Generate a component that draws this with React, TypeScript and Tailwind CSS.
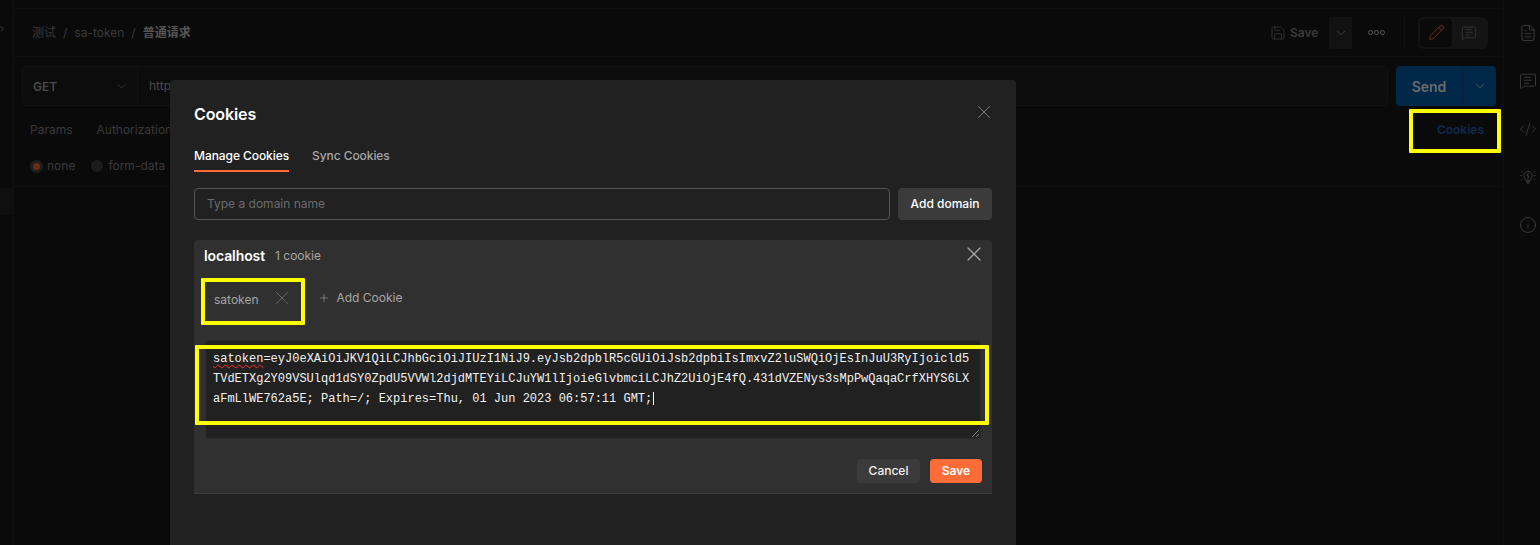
import { X, ChevronDown, Save, Pencil, MessageSquareText, FileText, CodeXml, Info, Plus } from "lucide-react";

const sans = "font-['Inter','Noto_Sans_CJK_SC',sans-serif]";

function Backdrop() {
  return (
    <div className="flex h-[545px] w-[1540px] overflow-hidden bg-[#0a0a0a]">
      <div className="flex w-[14px] shrink-0 flex-col border-r border-[#0f0f0f]">
        <svg width="4" height="8" viewBox="0 0 4 8" fill="none" stroke="#333" strokeWidth="1" className="mt-[26px]">
          <path d="M0 1h2l1 1v1L1 5" />
        </svg>
        <div className="mt-[154px] h-[27px] bg-[#0f0f0f]" />
      </div>
      <div className="flex min-w-0 flex-1 flex-col">
        <div className="h-[9px] shrink-0 border-b border-[#0f0f0f]" />
        <div className="flex h-[48px] shrink-0 items-center border-b border-[#0f0f0f] pl-[18px] pr-[15px]">
          <div className="flex items-center gap-[7px] text-[12px] text-[#3a3a3a]">
            <span>测试</span><span>/</span><span>sa-token</span><span>/</span>
            <span className="font-semibold text-[#555]">普通请求</span>
          </div>
          <div className="ml-auto flex h-[32px] items-center">
            <div className="flex h-[32px] w-[69px] items-center gap-[4px] pl-[10px] text-[12px] font-semibold text-[#3a3a3a]">
              <Save size={16} strokeWidth={1.2} /><span>Save</span>
            </div>
            <div className="flex h-[32px] w-[23px] items-center justify-center bg-[#121212] text-[#555]">
              <ChevronDown size={14} strokeWidth={1.2} />
            </div>
            <div className="ml-[16px] flex gap-[1px]">
              <span className="h-[5px] w-[5px] rounded-full border border-[#555]" />
              <span className="h-[5px] w-[5px] rounded-full border border-[#555]" />
              <span className="h-[5px] w-[5px] rounded-full border border-[#555]" />
            </div>
            <div className="ml-[19px] h-[32px] w-[1px] bg-[#111]" />
            <div className="ml-[13px] flex h-[32px] w-[70px] items-center rounded-[6px] bg-[#141414] p-[2px]">
              <div className="flex h-[28px] w-[32px] items-center justify-center rounded-[4px] bg-[#0a0a0a] text-[#7a3518]"><Pencil size={17} strokeWidth={1.2} /></div>
              <div className="flex h-[28px] w-[34px] items-center justify-center text-[#3a3a3a]"><MessageSquareText size={16} strokeWidth={1.2} /></div>
            </div>
          </div>
        </div>
        <div className="mt-[9px] flex h-[40px] shrink-0 items-stretch pl-[8px] pr-[7px]">
          <div className="flex flex-1 rounded-[3px] border border-[#121212] bg-[#0c0c0c]">
            <div className="flex w-[115px] items-center justify-between border-r border-[#121212] pl-[10px] pr-[9px] pt-[1px] text-[12px] font-semibold text-[#4a4a4a]">
              <span>GET</span><ChevronDown size={13} strokeWidth={1.2} />
            </div>
            <div className="flex items-center pl-[11px] text-[12px] text-[#4a4a4a]">http://localhost:8081/</div>
          </div>
          <div className="ml-[8px] flex w-[100px] rounded-[4px] bg-[#012849] text-[#6b6b6b]">
            <div className="flex w-[67px] items-center justify-center border-r border-[#032139] text-[14px] font-semibold">Send</div>
            <div className="flex flex-1 items-center justify-center"><ChevronDown size={14} strokeWidth={1.2} /></div>
          </div>
        </div>
        <div className="flex h-[48px] shrink-0 items-center pl-[16px] pr-[19px] text-[12px] text-[#3a3a3a]">
          <span>Params</span><span className="ml-[24px]">Authorization</span>
          <span className="ml-auto font-semibold text-[#0e2a4e]">Cookies</span>
        </div>
        <div className="flex h-[33px] shrink-0 items-center border-b border-[#0f0f0f] pb-[8px] pl-[16px] text-[12px] text-[#3a3a3a]">
          <span className="flex h-[13px] w-[13px] items-center justify-center rounded-full bg-[#1f1f1f]"><span className="h-[7px] w-[7px] rounded-full bg-[#6b2d14]" /></span>
          <span className="ml-[4px]">none</span>
          <span className="ml-[16px] h-[12px] w-[12px] rounded-full bg-[#1c1c1c]" />
          <span className="ml-[5px]">form-data</span>
        </div>
      </div>
      <div className="flex w-[37px] shrink-0 flex-col items-center border-l border-[#0f0f0f] pl-[12px] pt-[24px] text-[#484848]">
        <FileText size={18} strokeWidth={1} />
        <MessageSquareText size={18} strokeWidth={1} className="mt-[30px]" />
        <CodeXml size={18} strokeWidth={1} className="mt-[30px]" />
        <svg width="18" height="18" viewBox="0 0 18 18" fill="none" stroke="currentColor" strokeWidth="0.8" className="mt-[30px]">
          <path d="M6.7 12.2c0-1.3-1.9-2-1.9-4.6a4.2 4.2 0 0 1 8.4 0c0 2.6-1.9 3.3-1.9 4.6zM7 13.6h4M7.5 15h3" />
          <path d="M9.6 4.8 7.8 8h2.4l-1.8 3" />
          <path d="M1.2 7.6h1.6M15.2 7.6h1.6M2.4 3.4l1.3.9M15.6 3.4l-1.3.9M2.4 11.8l1.3-.9M15.6 11.8l-1.3-.9" />
        </svg>
        <Info size={18} strokeWidth={1} className="mt-[30px]" />
      </div>
    </div>
  );
}

function Modal() {
  return (
    <div className={`absolute left-[170px] top-[80px] flex h-[465px] w-[846px] flex-col overflow-hidden rounded-t-[4px] bg-[#212121] px-[24px] ${sans}`}>
      <div className="flex h-[68px] shrink-0 items-center justify-between">
        <span className="text-[16px] font-semibold leading-[24px] tracking-[-0.1px] text-white">Cookies</span>
        <X size={22} strokeWidth={0.75} className="-mr-[3px] -mt-[4px] text-[#a6a6a6]" />
      </div>
      <div className="flex h-[24px] shrink-0 gap-[23px] text-[12px] font-medium leading-[16px] tracking-[-0.07px]">
        <span className="h-[24px] border-b-[2px] border-[#ff6c37] text-white">Manage Cookies</span>
        <span className="text-[#a6a6a6]">Sync Cookies</span>
      </div>
      <div className="mt-[16px] flex h-[32px] shrink-0 gap-[8px]">
        <div className="flex flex-1 items-center rounded-[4px] border border-[#555] pl-[12px] text-[12px] text-[#6b6b6b]">Type a domain name</div>
        <div className="flex w-[94px] items-center justify-center rounded-[4px] bg-[#3b3b3b] text-[12px] font-medium text-white">Add domain</div>
      </div>
      <div className="mt-[20px] flex h-[254px] shrink-0 flex-col rounded-t-[4px] border-b border-[#3b3b3b] bg-[#303030]">
        <div className="flex h-[30px] shrink-0 items-center pl-[10px] pr-[6px]">
          <span className="text-[14px] font-semibold tracking-[-0.1px] text-white">localhost</span>
          <span className="ml-[10px] pt-[1px] text-[12px] text-[#a6a6a6]">1 cookie</span>
          <X size={24} strokeWidth={1.3} className="ml-auto -mt-[2px] text-[#a6a6a6]" />
        </div>
        <div className="mt-[11px] flex h-[34px] shrink-0 items-center pl-[20px]">
          <span className="pt-[3px] text-[12px] text-[#a6a6a6]">satoken</span>
          <X size={22} strokeWidth={0.7} className="ml-[13px] text-[#8a8a8a]" />
          <Plus size={12} strokeWidth={1.2} className="ml-[25px] text-[#a6a6a6]" />
          <span className="ml-[6px] text-[12px] text-[#a6a6a6]">Add Cookie</span>
        </div>
        <div className="relative mx-[11px] mt-[25px] h-[99px] shrink-0 rounded-[4px] border border-[#2b2b2b] bg-[#212121] pl-[7px] pt-[8px] font-['Liberation_Mono',monospace] text-[12px] leading-[20px] text-[#f2f2f2]">
          <div className="whitespace-pre"><span className="underline decoration-wavy decoration-[#ff2d2d] decoration-1 underline-offset-2">satoken</span>=eyJ0eXAiOiJKV1QiLCJhbGciOiJIUzI1NiJ9.eyJsb2dpblR5cGUiOiJsb2dpbiIsImxvZ2luSWQiOjEsInJuU3RyIjoicld5</div>
          <div className="whitespace-pre">TVdETXg2Y09VSUlqd1dSY0ZpdU5VVWl2djdMTEYiLCJuYW1lIjoieGlvbmciLCJhZ2UiOjE4fQ.431dVZENys3sMpPwQaqaCrfXHYS6LX</div>
          <div className="whitespace-pre">aFmLlWE762a5E; Path=/; Expires=Thu, 01 Jun 2023 06:57:11 GMT;<span className="ml-[1px] inline-block h-[13px] w-[1px] align-[-3px] bg-white" /></div>
          <svg className="absolute bottom-0 right-0 text-[#9a9a9a]" width="9" height="9" viewBox="0 0 9 9" fill="none" stroke="currentColor" strokeWidth="0.8">
            <path d="M1 8 8 1M5 8l3-3" />
          </svg>
        </div>
        <div className="mt-[20px] flex justify-end gap-[10px] pr-[10px]">
          <div className="flex h-[24px] w-[63px] items-center justify-center rounded-[4px] bg-[#3b3b3b] text-[12px] font-medium text-[#f2f2f2]">Cancel</div>
          <div className="flex h-[24px] w-[52px] items-center justify-center rounded-[4px] bg-[#ff6c37] text-[12px] font-semibold text-white">Save</div>
        </div>
      </div>
    </div>
  );
}

export default function App() {
  return (
    <div className={`relative h-[545px] w-[1540px] overflow-hidden ${sans}`}>
      <Backdrop />
      <Modal />
      <div className="absolute left-[1409px] top-[109px] h-[44px] w-[92px] rounded-[1px] border-[4px] border-[#ffff00]" />
      <div className="absolute left-[201px] top-[278px] h-[47px] w-[104px] rounded-[1px] border-[4px] border-[#ffff00]" />
      <div className="absolute left-[195px] top-[345px] h-[80px] w-[794px] rounded-[1px] border-[4px] border-[#ffff00]" />
    </div>
  );
}
